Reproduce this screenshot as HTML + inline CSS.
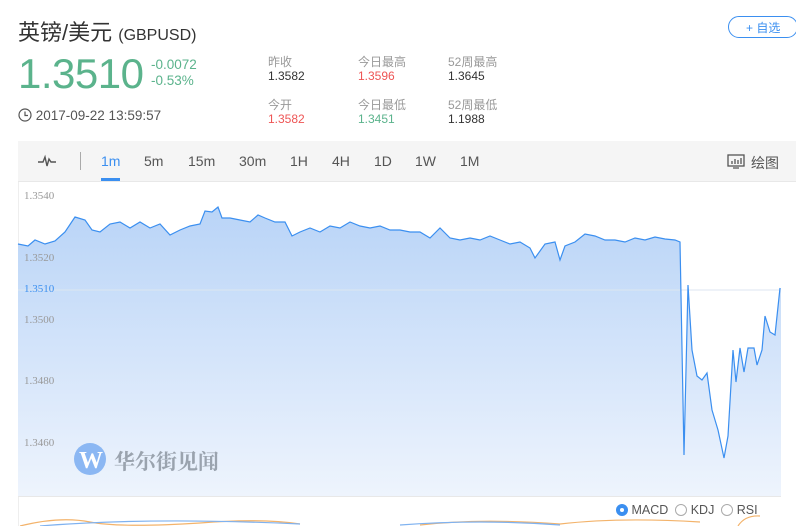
<!DOCTYPE html>
<html><head><meta charset="utf-8"><style>
body{margin:0;width:796px;height:526px;overflow:hidden;background:#fff;font-family:"Liberation Sans","Noto Sans CJK SC",sans-serif;position:relative}
.a{position:absolute;white-space:nowrap}
.lbl{color:#999;font-size:12px}
.val{font-size:12px;color:#333}
.tab{position:absolute;top:153px;font-size:14px;color:#555}
.ax{position:absolute;left:24px;font-family:"Liberation Serif",serif;font-size:11px;color:#999}
</style></head><body>
<div class="a" style="left:18px;top:15px;font-size:22px;color:#333">英镑/美元 <span style="font-size:16px">(GBPUSD)</span></div>
<div class="a" style="left:728px;top:16px;width:70px;height:22px;border:1px solid #3b8ff0;border-radius:12px;color:#3b8ff0;font-size:12px;line-height:22px;text-indent:17px;box-sizing:border-box">+ 自选</div>
<div class="a" style="left:18px;top:50px;font-size:42px;color:#5bb38c;letter-spacing:-0.5px">1.3510</div>
<div class="a" style="left:151px;top:57px;font-size:13.5px;color:#5bb38c;line-height:16px">-0.0072<br>-0.53%</div>
<div class="a" style="left:18px;top:108px;font-size:13.5px;color:#555"><svg width="14" height="14" style="vertical-align:-2px" viewBox="0 0 14 14"><circle cx="7" cy="7" r="6" fill="none" stroke="#555" stroke-width="1.2"/><path d="M7 3.5V7.5H10" fill="none" stroke="#555" stroke-width="1.2"/></svg> 2017-09-22 13:59:57</div>
<div class="a lbl" style="left:268px;top:53px">昨收</div><div class="a val" style="left:268px;top:69px">1.3582</div>
<div class="a lbl" style="left:358px;top:53px">今日最高</div><div class="a val" style="left:358px;top:69px;color:#e55">1.3596</div>
<div class="a lbl" style="left:448px;top:53px">52周最高</div><div class="a val" style="left:448px;top:69px">1.3645</div>
<div class="a lbl" style="left:268px;top:96px">今开</div><div class="a val" style="left:268px;top:112px;color:#e55">1.3582</div>
<div class="a lbl" style="left:358px;top:96px">今日最低</div><div class="a val" style="left:358px;top:112px;color:#5bb38c">1.3451</div>
<div class="a lbl" style="left:448px;top:96px">52周最低</div><div class="a val" style="left:448px;top:112px">1.1988</div>
<div class="a" style="left:18px;top:141px;width:778px;height:40px;background:#f5f5f5;border-bottom:1px solid #e8e8e8"></div>
<svg class="a" style="left:37px;top:153px" width="20" height="16" viewBox="0 0 20 16"><path d="M1 9H6L8 4L10 13L12 6L14 9H19" fill="none" stroke="#555" stroke-width="1.4"/></svg>
<div class="a" style="left:80px;top:152px;width:1px;height:18px;background:#aaa"></div>
<div class="tab" style="left:101px;color:#3b8ff0">1m</div>
<div class="a" style="left:101px;top:178px;width:19px;height:3px;background:#3b8ff0"></div>
<div class="tab" style="left:144px">5m</div><div class="tab" style="left:188px">15m</div><div class="tab" style="left:239px">30m</div>
<div class="tab" style="left:290px">1H</div><div class="tab" style="left:332px">4H</div><div class="tab" style="left:374px">1D</div>
<div class="tab" style="left:415px">1W</div><div class="tab" style="left:460px">1M</div>
<svg class="a" style="left:727px;top:154px" width="18" height="16" viewBox="0 0 18 16"><rect x="1" y="1" width="16" height="11" fill="none" stroke="#555" stroke-width="1.3"/><path d="M5 10V7M8 10V5M11 10V6M14 10V4M6 14H12" stroke="#555" stroke-width="1.3"/></svg>
<div class="a" style="left:751px;top:153px;font-size:14px;color:#555">绘图</div>
<div class="a" style="left:18px;top:182px;width:1px;height:344px;background:#eee"></div>
<svg class="a" style="left:0;top:0" width="796" height="526">
<defs><linearGradient id="g" x1="0" y1="0" x2="0" y2="1"><stop offset="0" stop-color="#b9d4f7"/><stop offset="1" stop-color="#eef4fd"/></linearGradient></defs>
<polygon fill="url(#g)" points="18,496 18,244 28,246 35,240 45,244 55,241 65,232 75,217 85,220 92,230 100,232 110,224 120,222 130,228 140,222 150,228 160,224 170,235 180,230 190,226 200,224 205,211 212,212 218,207 222,218 230,218 240,220 250,222 258,215 265,218 275,222 285,222 292,236 300,232 310,228 320,232 330,226 340,228 350,222 360,226 370,228 380,226 390,230 400,230 410,232 420,232 430,238 440,228 450,238 460,240 470,238 480,240 490,236 500,240 510,244 520,242 530,248 535,258 545,244 555,242 560,260 565,246 575,242 585,234 595,236 605,240 615,240 625,242 635,238 645,240 655,237 665,239 675,240 680,242 684,455 688,285 692,350 697,376 702,380 707,373 712,410 718,430 724,458 728,436 733,350 736,382 740,348 744,372 748,348 754,348 757,365 762,350 765,316 770,332 775,335 780,288 781,288 781,496"/>
<line x1="18" y1="290" x2="781" y2="290" stroke="#dde6f0" stroke-width="1"/>
<polyline fill="none" stroke="#3b8ff0" stroke-width="1.2" points="18,244 28,246 35,240 45,244 55,241 65,232 75,217 85,220 92,230 100,232 110,224 120,222 130,228 140,222 150,228 160,224 170,235 180,230 190,226 200,224 205,211 212,212 218,207 222,218 230,218 240,220 250,222 258,215 265,218 275,222 285,222 292,236 300,232 310,228 320,232 330,226 340,228 350,222 360,226 370,228 380,226 390,230 400,230 410,232 420,232 430,238 440,228 450,238 460,240 470,238 480,240 490,236 500,240 510,244 520,242 530,248 535,258 545,244 555,242 560,260 565,246 575,242 585,234 595,236 605,240 615,240 625,242 635,238 645,240 655,237 665,239 675,240 680,242 684,455 688,285 692,350 697,376 702,380 707,373 712,410 718,430 724,458 728,436 733,350 736,382 740,348 744,372 748,348 754,348 757,365 762,350 765,316 770,332 775,335 780,288"/>
<line x1="18" y1="496.5" x2="781" y2="496.5" stroke="#e8e8e8"/>
<path d="M20 526 Q60 516 90 522 T200 523 Q260 518 300 524 M420 525 Q480 518 560 524 Q620 517 700 522 M738 526 Q745 515 760 516" fill="none" stroke="#f3b36b" stroke-width="1.2"/>
<path d="M40 526 Q150 517 300 524 M400 525 Q480 519 560 525" fill="none" stroke="#7fb2f0" stroke-width="1.2"/>
<circle cx="90" cy="459" r="16" fill="#8bb7f3"/>
<text x="79" y="468" font-family="Liberation Serif,serif" font-size="24" font-weight="bold" fill="#fff">W</text>
</svg>
<div class="a" style="left:114px;top:446px;font-family:'Noto Serif CJK SC',serif;font-size:21px;font-weight:bold;color:#9aa3ae">华尔街见闻</div>
<div class="ax" style="top:190px">1.3540</div>
<div class="ax" style="top:252px">1.3520</div>
<div class="ax" style="top:283px;color:#3b8ff0">1.3510</div>
<div class="ax" style="top:314px">1.3500</div>
<div class="ax" style="top:375px">1.3480</div>
<div class="ax" style="top:437px">1.3460</div>
<div class="a" style="left:616px;top:503px;font-size:12.5px;color:#555">
<span style="display:inline-block;width:12px;height:12px;border-radius:50%;background:#3b8ff0;vertical-align:-2px;position:relative"><span style="position:absolute;left:4px;top:4px;width:4px;height:4px;border-radius:50%;background:#fff"></span></span> MACD&nbsp;
<span style="display:inline-block;width:12px;height:12px;border-radius:50%;border:1px solid #aaa;box-sizing:border-box;vertical-align:-2px"></span> KDJ&nbsp;
<span style="display:inline-block;width:12px;height:12px;border-radius:50%;border:1px solid #aaa;box-sizing:border-box;vertical-align:-2px"></span> RSI</div>
</body></html>
